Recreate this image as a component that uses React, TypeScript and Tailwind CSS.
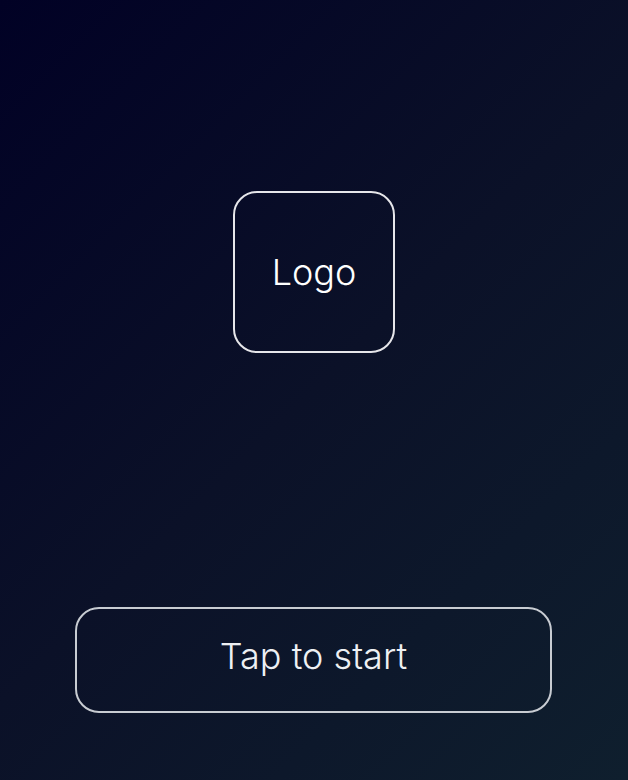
export default function App() {
  return (
    <div
      className="w-[628px] h-[780px] flex flex-col items-center bg-[linear-gradient(135deg,#010125_0%,#0b1128_50%,#0f1f2e_100%)]"
      style={{ fontFamily: "Inter, 'Noto Sans', sans-serif" }}
    >
      <div className="mt-[191px] w-[162px] h-[162px] rounded-[24px] border-2 border-[#e6e6ea] flex items-center justify-center">
        <span className="text-[36px] font-light text-white leading-none">Logo</span>
      </div>
      <div className="mt-[254px] self-start ml-[75px] w-[477px] h-[106px] rounded-[24px] border-2 border-[#c8ccd2] flex items-center justify-center pb-[8px]">
        <span className="text-[36px] font-light text-[#eef0f3] leading-none">Tap to start</span>
      </div>
    </div>
  );
}
